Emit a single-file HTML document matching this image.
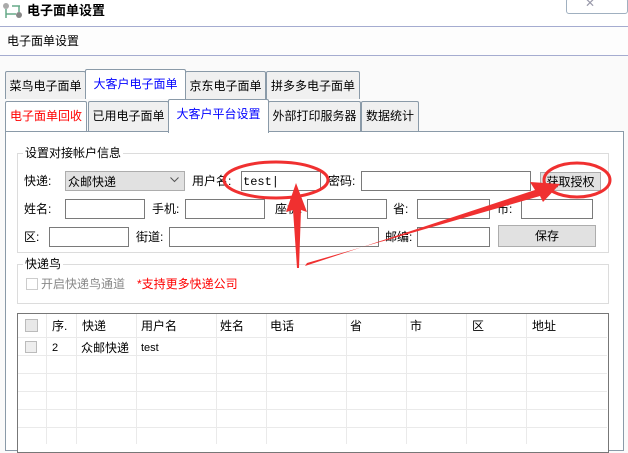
<!DOCTYPE html>
<html><head><meta charset="utf-8"><style>
*{box-sizing:border-box;margin:0;padding:0}
body{width:628px;height:444px;overflow:hidden;background:#fafafa;font-family:"Liberation Sans","Noto Sans CJK SC",sans-serif;font-size:12px;color:#000;position:relative}
.a{position:absolute}
.t{position:absolute;white-space:nowrap;line-height:14px}
.in{position:absolute;border:1px solid #7a7a7a;background:#fff;height:20px}
.tab{position:absolute;border:1px solid #8a9aa8;border-bottom:none;background:#f0f0f0;border-radius:2px 2px 0 0;text-align:center;line-height:28px;white-space:nowrap}
.sel{background:#fff;color:#0000ff}
.btn{position:absolute;background:#e1e1e1;border:1px solid #adadad;text-align:center;line-height:18px}
.gb{position:absolute;border:1px solid #dcdcdc}
.hl{position:absolute;height:1px;background:#eaeaea;left:18px;width:589px}
.vl{position:absolute;width:1px;background:#eaeaea;top:314px;height:130px}
</style></head><body>
<div class="a" style="left:0;top:0;width:628px;height:26px;background:#fff"></div>
<svg class="a" style="left:2px;top:2px" width="22" height="18"><rect x="1" y="1" width="6" height="6" rx="3" fill="#aaa"/><rect x="14" y="10" width="6" height="6" rx="3" fill="#888"/><path d="M4 7v9M10 4h8M17 4v6M4 12h10" stroke="#6a8" stroke-width="1.5" fill="none"/></svg>
<div class="t" style="left:27px;top:4px;font-weight:bold;font-size:13px">电子面单设置</div>
<div class="a" style="left:566px;top:-2px;width:62px;height:16px;border:1px solid #a0b0c0;border-radius:3px;background:#fff"></div>
<div class="t" style="left:585px;top:-4px;color:#99a">✕</div>
<div class="a" style="left:0;top:26px;width:628px;height:1px;background:#a5acd0"></div>
<div class="a" style="left:0;top:27px;width:628px;height:28px;background:#fdfdfd"></div>
<div class="t" style="left:7px;top:34px">电子面单设置</div>
<div class="a" style="left:0;top:55px;width:628px;height:1px;background:#a5acd0"></div>

<div class="tab" style="left:5px;top:71px;width:81px;height:28px">菜鸟电子面单</div>
<div class="tab sel" style="left:85px;top:69px;width:101px;height:30px;z-index:2">大客户电子面单</div>
<div class="tab" style="left:185px;top:71px;width:81px;height:28px">京东电子面单</div>
<div class="tab" style="left:266px;top:71px;width:94px;height:28px">拼多多电子面单</div>
<div class="tab" style="left:5px;top:101px;width:82px;height:31px;background:#fff;color:#f00">电子面单回收</div>
<div class="tab" style="left:88px;top:101px;width:81px;height:31px">已用电子面单</div>
<div class="tab sel" style="left:168px;top:99px;width:101px;height:34px;z-index:2">大客户平台设置</div>
<div class="tab" style="left:268px;top:101px;width:93px;height:31px">外部打印服务器</div>
<div class="tab" style="left:361px;top:101px;width:58px;height:31px">数据统计</div>

<div class="a" style="left:5px;top:131px;width:619px;height:320px;border:1px solid #8a9aa8;background:#fff"></div>

<div class="gb" style="left:17px;top:153px;width:592px;height:100px"></div>
<div class="t" style="left:23px;top:146px;background:#fff;padding:0 2px">设置对接帐户信息</div>
<div class="t" style="left:24px;top:174px">快递:</div>
<div class="a" style="left:65px;top:171px;width:120px;height:20px;background:#e1e1e1;border:1px solid #adadad"></div>
<div class="t" style="left:68px;top:175px">众邮快递</div>
<svg class="a" style="left:170px;top:177px" width="9" height="6"><path d="M0.5 0.5L4.5 4.5L8.5 0.5" stroke="#555" fill="none"/></svg>
<div class="t" style="left:192px;top:174px">用户名:</div>
<div class="in" style="left:241px;top:171px;width:80px"></div>
<div class="t" style="left:243px;top:175px;font-family:'Liberation Mono',monospace">test|</div>
<div class="t" style="left:328px;top:174px">密码:</div>
<div class="in" style="left:361px;top:171px;width:170px"></div>
<div class="btn" style="left:540px;top:172px;width:61px;height:19px">获取授权</div>

<div class="t" style="left:24px;top:202px">姓名:</div>
<div class="in" style="left:65px;top:199px;width:80px"></div>
<div class="t" style="left:152px;top:202px">手机:</div>
<div class="in" style="left:185px;top:199px;width:80px"></div>
<div class="t" style="left:275px;top:202px">座机:</div>
<div class="in" style="left:307px;top:199px;width:80px"></div>
<div class="t" style="left:393px;top:202px">省:</div>
<div class="in" style="left:417px;top:199px;width:73px"></div>
<div class="t" style="left:497px;top:202px">市:</div>
<div class="in" style="left:521px;top:199px;width:72px"></div>

<div class="t" style="left:24px;top:230px">区:</div>
<div class="in" style="left:49px;top:227px;width:80px"></div>
<div class="t" style="left:136px;top:230px">街道:</div>
<div class="in" style="left:169px;top:227px;width:210px"></div>
<div class="t" style="left:385px;top:230px">邮编:</div>
<div class="in" style="left:417px;top:227px;width:73px"></div>
<div class="btn" style="left:498px;top:225px;width:98px;height:22px;line-height:20px">保存</div>

<div class="gb" style="left:17px;top:264px;width:592px;height:40px"></div>
<div class="t" style="left:23px;top:257px;background:#fff;padding:0 2px">快递鸟</div>
<div class="a" style="left:26px;top:278px;width:12px;height:12px;border:1px solid #ccc"></div>
<div class="t" style="left:41px;top:277px;color:#888">开启快递鸟通道</div>
<div class="t" style="left:137px;top:277px;color:#f00">*支持更多快递公司</div>

<div class="a" style="left:17px;top:313px;width:592px;height:140px;border:1px solid #777;background:#fff"></div>
<div class="hl" style="top:337px"></div><div class="hl" style="top:355px"></div><div class="hl" style="top:373px"></div><div class="hl" style="top:391px"></div><div class="hl" style="top:409px"></div><div class="hl" style="top:427px"></div>
<div class="vl" style="left:46px"></div><div class="vl" style="left:76px"></div><div class="vl" style="left:136px"></div><div class="vl" style="left:216px"></div><div class="vl" style="left:266px"></div><div class="vl" style="left:346px"></div><div class="vl" style="left:406px"></div><div class="vl" style="left:466px"></div><div class="vl" style="left:526px"></div>
<div class="a" style="left:25px;top:319px;width:13px;height:13px;border:1px solid #bbb;background:#e8e8e8"></div>
<div class="a" style="left:25px;top:341px;width:12px;height:12px;border:1px solid #bbb;background:#eee"></div>
<div class="t" style="left:52px;top:319px">序.</div><div class="t" style="left:82px;top:319px">快递</div><div class="t" style="left:141px;top:319px">用户名</div><div class="t" style="left:220px;top:319px">姓名</div><div class="t" style="left:270px;top:319px">电话</div><div class="t" style="left:350px;top:319px">省</div><div class="t" style="left:410px;top:319px">市</div><div class="t" style="left:472px;top:319px">区</div><div class="t" style="left:532px;top:319px">地址</div>
<div class="t" style="left:52px;top:341px;font-size:11px">2</div><div class="t" style="left:81px;top:341px">众邮快递</div><div class="t" style="left:141px;top:341px;font-size:11px">test</div>

<svg class="a" style="left:0;top:0" width="628" height="444">
<g fill="none" stroke="#f03030" stroke-width="3"><ellipse cx="276" cy="180" rx="52" ry="18"/><ellipse cx="577" cy="180" rx="33" ry="17"/></g>
<g fill="#f03030"><polygon points="297,268 299,268 301,210 307,212 296,183 286,212 293,210"/><polygon points="305,266 307,263 540,196 543,202 560,184 530,182 535,190"/></g>
</svg>
</body></html>
